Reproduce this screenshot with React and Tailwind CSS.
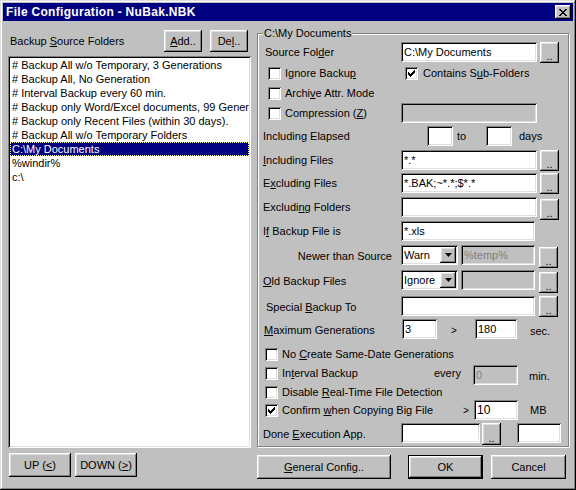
const raised = 'shadow-[inset_-1px_-1px_#000,inset_1px_1px_#fff,inset_-2px_-2px_#808080,inset_2px_2px_#dfdfdf]'
const sunken = 'shadow-[inset_1px_1px_#808080,inset_-1px_-1px_#fff,inset_2px_2px_#000,inset_-2px_-2px_#dfdfdf]'

const sources = [
  '# Backup All w/o Temporary, 3 Generations',
  '# Backup All, No Generation',
  '# Interval Backup every 60 min.',
  '# Backup only Word/Excel documents, 99 Generations',
  '# Backup only Recent Files (within 30 days).',
  '# Backup All w/o Temporary Folders',
  'C:\\My Documents',
  '%windir%',
  'c:\\',
]

const Button = ({ className = '', children }) => (
  <div className={`${raised} bg-[#c0c0c0] flex items-center justify-center ${className}`}>{children}</div>
)

const Dots = ({ className = 'h-[21px]' }) => (
  <div className={`${raised} bg-[#c0c0c0] w-[19px] flex items-end justify-center pb-[2px] leading-[10px] ${className}`}>..</div>
)

const Field = ({ className = '', value = '', disabled = false }) => (
  <div
    className={`${sunken} ${disabled ? 'bg-[#c0c0c0] text-[#808080]' : 'bg-white'} h-[20px] flex items-center px-[3px] overflow-hidden whitespace-nowrap ${className}`}
  >
    {value}
  </div>
)

// 7x7 win95 tick
const tick = [
  [6, 0], [5, 1], [6, 1], [0, 2], [4, 2], [5, 2], [6, 2],
  [0, 3], [1, 3], [3, 3], [4, 3], [5, 3],
  [0, 4], [1, 4], [2, 4], [3, 4], [4, 4],
  [1, 5], [2, 5], [3, 5], [2, 6],
]

const Check = ({ checked = false }) => (
  <div className={`${sunken} bg-white w-[13px] h-[13px] shrink-0 flex items-center justify-center`}>
    {checked && (
      <svg width="7" height="7" viewBox="0 0 7 7" shapeRendering="crispEdges">
        {tick.map(([x, y]) => (
          <rect key={`${x}-${y}`} x={x} y={y} width="1" height="1" fill="#000" />
        ))}
      </svg>
    )}
  </div>
)

const Select = ({ value }) => (
  <div className={`${sunken} bg-white w-[57px] h-[20px] flex items-center pl-[3px] pr-[2px]`}>
    <span className="flex-1">{value}</span>
    <div className={`${raised} bg-[#c0c0c0] w-[16px] h-[16px] flex items-center justify-center`}>
      <svg width="7" height="4" viewBox="0 0 7 4">
        <path d="M0 0h7L3.5 4z" fill="#000" />
      </svg>
    </div>
  </div>
)

export default function App() {
  return (
    <div
      className={`w-[576px] h-[490px] bg-[#c0c0c0] p-[3px] flex flex-col text-[11px] text-black font-['Liberation_Sans',Arial,sans-serif] shadow-[inset_-1px_-1px_#000,inset_1px_1px_#dfdfdf,inset_-2px_-2px_#808080,inset_2px_2px_#fff]`}
    >
      {/* title bar */}
      <div className="h-[18px] bg-[#000080] flex items-center justify-between pl-[3px] pr-[2px]">
        <span className="text-white font-bold text-[12px] tracking-[0.3px]">File Configuration - NuBak.NBK</span>
        <div className={`${raised} bg-[#c0c0c0] w-[16px] h-[14px] flex items-center justify-center`}>
          <svg width="8" height="7" viewBox="0 0 8 7" shapeRendering="crispEdges">
            <path d="M0 0h2v1h1v1h2v-1h1v-1h2v1h-1v1h-1v1h-1v1h1v1h1v1h1v1h-2v-1h-1v-1h-2v1h-1v1h-2v-1h1v-1h1v-1h1v-1h-1v-1h-1v-1h-1z" fill="#000" />
          </svg>
        </div>
      </div>

      <div className="flex-1 flex pl-[5px]">
        {/* left column */}
        <div className="w-[243px] flex flex-col">
          <div className="mt-[9px] h-[22px] flex items-center">
            <span className="flex-1 pl-[2px]">
              Backup <u>S</u>ource Folders
            </span>
            <Button className="w-[38px] h-[22px]">
              <span><u>A</u>dd..</span>
            </Button>
            <Button className="w-[38px] h-[22px] ml-[8px] mr-[3px]">
              <span>De<u>l</u>..</span>
            </Button>
          </div>
          <div className={`${sunken} bg-white mt-[4px] h-[392px] p-[2px] overflow-hidden`}>
            {sources.map((s, i) => (
              <div
                key={i}
                className={`h-[14px] leading-[14px] px-[2px] whitespace-nowrap overflow-hidden ${
                  i === 6 ? 'bg-[#000080] text-white outline outline-1 outline-dotted outline-[#ffff80] -outline-offset-1' : ''
                }`}
              >
                {s}
              </div>
            ))}
          </div>
          <div className="mt-[5px] flex">
            <Button className="w-[62px] h-[24px] ml-[1px]">
              <span>UP (<u>&lt;</u>)</span>
            </Button>
            <Button className="w-[62px] h-[24px] ml-[4px]">
              <span>DOWN (<u>&gt;</u>)</span>
            </Button>
          </div>
        </div>

        {/* right column */}
        <div className="ml-[6px] w-[312px] flex flex-col">
          <div className="mt-[12px] h-[414px] border border-[#808080] shadow-[inset_1px_1px_#fff,1px_1px_#fff] flex flex-col">
            <span className="-mt-[7px] ml-[5px] px-[1px] bg-[#c0c0c0] self-start h-[13px] leading-[13px]">C:\My Documents</span>

            <div className="mt-[2px] h-[21px] flex items-start">
              <span className="w-[143px] pl-[7px] h-[20px] flex items-center">
                <span>
                  Source Fol<u>d</u>er
                </span>
              </span>
              <Field className="w-[136px]" value="C:\My Documents" />
              <Dots className="h-[21px] ml-[3px]" />
            </div>

            <div className="mt-[1px] h-[18px] flex items-center">
              <div className="w-[143px] pl-[10px] flex items-center">
                <Check />
                <span className="ml-[4px]">
                  Ignore Backu<u>p</u>
                </span>
              </div>
              <div className="pl-[4px] flex items-center">
                <Check checked />
                <span className="ml-[5px]">
                  Contains S<u>u</u>b-Folders
                </span>
              </div>
            </div>

            <div className="mt-[2px] h-[18px] flex items-center">
              <div className="w-[143px] pl-[10px] flex items-center">
                <Check />
                <span className="ml-[4px]">
                  Archi<u>v</u>e Attr. Mode
                </span>
              </div>
            </div>

            <div className="mt-[1px] h-[20px] flex items-center">
              <div className="w-[143px] pl-[10px] flex items-center">
                <Check />
                <span className="ml-[4px]">
                  Compression (<u>Z</u>)
                </span>
              </div>
              <Field className="w-[136px] h-[19px]" disabled />
            </div>

            <div className="mt-[3px] h-[20px] flex items-center">
              <span className="w-[143px] pl-[5px]">Including Elapsed</span>
              <Field className="w-[26px] ml-[26px]" />
              <span className="w-[33px] pl-[4px]">to</span>
              <Field className="w-[26px]" />
              <span className="ml-[7px]">days</span>
            </div>

            <div className="mt-[4px] h-[21px] flex items-start">
              <span className="w-[143px] pl-[5px] h-[20px] flex items-center">
                <span>
                  <u>I</u>ncluding Files
                </span>
              </span>
              <Field className="w-[136px]" value="*.*" />
              <Dots className="h-[21px] ml-[3px]" />
            </div>

            <div className="mt-[2px] h-[21px] flex items-start">
              <span className="w-[143px] pl-[5px] h-[20px] flex items-center">
                <span>
                  E<u>x</u>cluding Files
                </span>
              </span>
              <Field className="w-[136px]" value="*.BAK;~*.*;$*.*" />
              <Dots className="h-[21px] ml-[3px]" />
            </div>

            <div className="mt-[3px] h-[21px] flex items-start">
              <span className="w-[143px] pl-[5px] h-[20px] flex items-center">
                <span>
                  Excludi<u>n</u>g Folders
                </span>
              </span>
              <Field className="w-[136px]" />
              <Dots className="h-[21px] ml-[3px] mt-[2px]" />
            </div>

            <div className="mt-[3px] h-[20px] flex items-center">
              <span className="w-[143px] pl-[5px] mt-[1px]">
                I<u>f</u> Backup File is
              </span>
              <Field className="w-[134px]" value="*.xls" />
            </div>

            <div className="mt-[4px] h-[23px] flex items-start">
              <span className="w-[143px] pr-[9px] text-right h-[20px] leading-[22px]">Newer than Source</span>
              <Select value="Warn" />
              <Field className="w-[74px] h-[19px] ml-[3px]" value="%temp%" disabled />
              <Dots className="h-[21px] ml-[4px] mt-[2px]" />
            </div>

            <div className="mt-[2px] h-[23px] flex items-start">
              <span className="w-[143px] pl-[5px] h-[20px] leading-[22px]">
                <u>O</u>ld Backup Files
              </span>
              <Select value="Ignore" />
              <Field className="w-[74px] h-[19px] ml-[3px]" disabled />
              <Dots className="h-[21px] ml-[4px] mt-[2px]" />
            </div>

            <div className="mt-[3px] h-[21px] flex items-start">
              <span className="w-[143px] pl-[8px] h-[20px] leading-[22px]">
                Special <u>B</u>ackup To
              </span>
              <Field className="w-[134px]" />
              <Dots className="h-[21px] ml-[4px]" />
            </div>

            <div className="mt-[2px] h-[20px] flex items-center">
              <span className="w-[143px] pl-[6px] mt-[3px]">
                <u>M</u>aximum Generations
              </span>
              <Field className="w-[35px] ml-[1px]" value="3" />
              <span className="w-[38px] pl-[14px] text-[10px] mt-[2px]">&gt;</span>
              <Field className="w-[42px]" value="180" />
              <span className="ml-[13px] mt-[4px]">sec.</span>
            </div>

            <div className="mt-[6px] h-[18px] flex items-center">
              <div className="pl-[7px] flex items-center">
                <Check />
                <span className="ml-[4px]">
                  No <u>C</u>reate Same-Date Generations
                </span>
              </div>
            </div>

            <div className="mt-[2px] h-[20px] flex items-start">
              <div className="w-[143px] pl-[7px] flex items-center h-[16px]">
                <Check />
                <span className="ml-[4px]">
                  In<u>t</u>erval Backup
                </span>
              </div>
              <span className="w-[72px] pl-[33px] h-[16px] leading-[16px]">every</span>
              <Field className="w-[45px]" value="0" disabled />
              <span className="ml-[11px] h-[20px] leading-[22px]">min.</span>
            </div>

            <div className="h-[14px] flex items-center">
              <div className="pl-[7px] flex items-center">
                <Check />
                <span className="ml-[4px]">
                  Disable <u>R</u>eal-Time File Detection
                </span>
              </div>
            </div>

            <div className="mt-[1px] h-[20px] flex items-center">
              <div className="w-[143px] pl-[7px] flex items-center">
                <Check checked />
                <span className="ml-[4px] whitespace-nowrap">
                  Confirm <u>w</u>hen Copying Big File
                </span>
              </div>
              <span className="w-[73px] pl-[62px] text-[10px]">&gt;</span>
              <Field className="w-[44px] text-[12px]" value="10" />
              <span className="ml-[12px]">MB</span>
            </div>

            <div className="mt-[3px] h-[22px] flex items-start">
              <span className="w-[143px] pl-[5px] h-[20px] leading-[22px]">
                Done <u>E</u>xecution App.
              </span>
              <Field className="w-[79px]" />
              <Dots className="h-[22px] ml-[2px]" />
              <Field className="w-[44px] ml-[16px]" />
            </div>
          </div>

          <div className="mt-[8px] flex">
            <Button className="w-[134px] h-[24px]">
              <span>
                <u>G</u>eneral Config..
              </span>
            </Button>
            <div className="ml-[17px] w-[75px] h-[24px] border border-black">
              <Button className="w-full h-full">OK</Button>
            </div>
            <Button className="w-[75px] h-[24px] ml-[8px]">Cancel</Button>
          </div>
        </div>
      </div>
    </div>
  )
}
